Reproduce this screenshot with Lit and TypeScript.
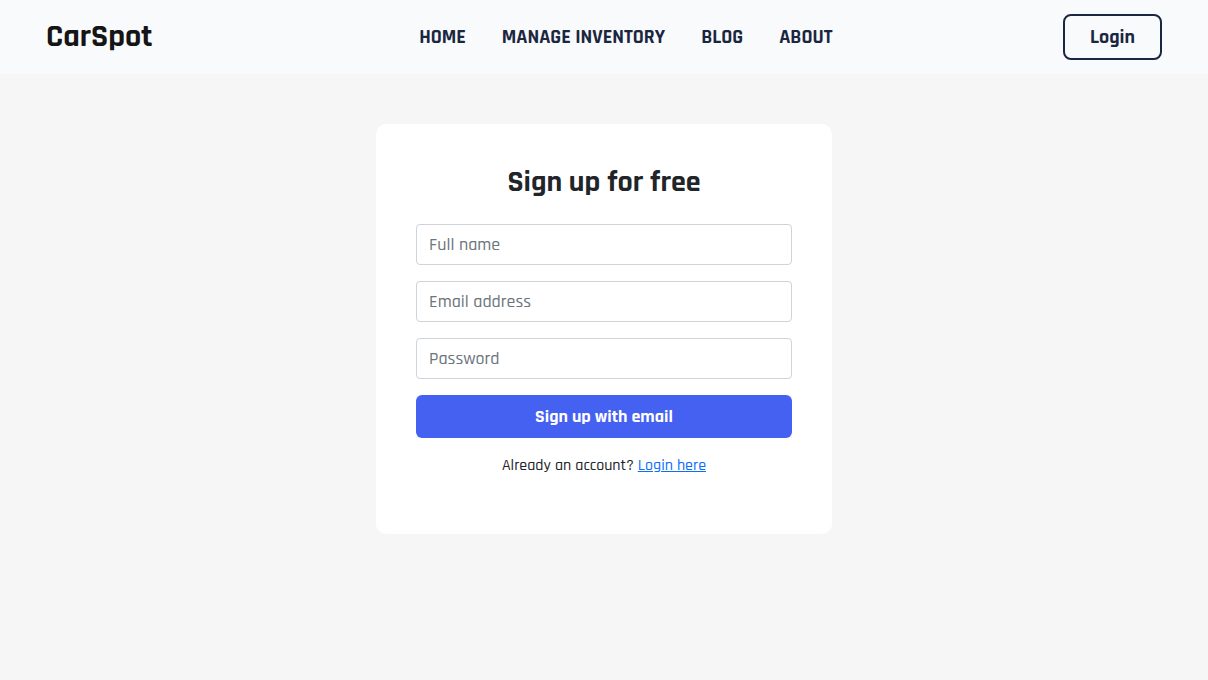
import { LitElement, html, css } from "lit";
import { customElement } from "lit/decorators.js";

const links = ["Home", "Manage Inventory", "Blog", "About"];

const fields = [
  { id: "name", type: "text", label: "Full name" },
  { id: "email", type: "email", label: "Email address" },
  { id: "password", type: "password", label: "Password" },
];

@customElement("site-header")
class SiteHeader extends LitElement {
  static styles = css`
    :host {
      display: block;
      background: #f8fafc;
    }
    .bar {
      display: flex;
      align-items: center;
      justify-content: space-between;
      padding: 14px 46px;
    }
    .brand {
      margin-right: 36px;
      color: #151515;
      font-size: 32px;
      font-weight: 700;
      line-height: 44px;
      text-decoration: none;
    }
    .menu {
      display: flex;
      margin: 0;
      padding: 0;
      list-style: none;
    }
    .link {
      display: block;
      padding: 0 18px;
      color: #1b2640;
      font-size: 20px;
      font-weight: 700;
      line-height: 28px;
      text-decoration: none;
      text-transform: uppercase;
    }
    .login {
      padding: 7px 25px;
      border: 2px solid #1b2640;
      border-radius: 8px;
      background: transparent;
      color: #1b2640;
      font: inherit;
      font-size: 20px;
      font-weight: 700;
      line-height: 28px;
      cursor: pointer;
    }
  `;

  render() {
    return html`
      <header class="bar">
        <a class="brand" href="#">CarSpot</a>
        <nav>
          <ul class="menu">
            ${links.map((l) => html`<li><a class="link" href="#">${l}</a></li>`)}
          </ul>
        </nav>
        <button class="login" type="button">Login</button>
      </header>
    `;
  }
}

@customElement("signup-form")
class SignupForm extends LitElement {
  static styles = css`
    :host {
      display: block;
      width: 100%;
      max-width: 456px;
    }
    .card {
      display: flex;
      flex-direction: column;
      gap: 16px;
      box-sizing: border-box;
      padding: 40px 40px 56px;
      border-radius: 10px;
      background: #fff;
    }
    .title {
      margin: 0 0 8px;
      color: #212529;
      font-size: 30px;
      font-weight: 700;
      line-height: 36px;
      text-align: center;
    }
    .input {
      display: block;
      box-sizing: border-box;
      width: 100%;
      padding: 8px 12px 7px;
      border: 1px solid #ced4da;
      border-radius: 4px;
      background: #fff;
      color: #212529;
      font: inherit;
      font-size: 18px;
      font-weight: 500;
      line-height: 24px;
    }
    .input::placeholder {
      color: #6c757d;
      opacity: 1;
    }
    .submit {
      padding: 10px 12px 9px;
      border: 0;
      border-radius: 6px;
      background: #4461f2;
      color: #fff;
      font: inherit;
      font-size: 18px;
      font-weight: 700;
      line-height: 24px;
      cursor: pointer;
    }
    .note {
      margin: 0;
      color: #212529;
      font-size: 16px;
      font-weight: 500;
      line-height: 24px;
      text-align: center;
    }
    .note a {
      color: #0d6efd;
    }
  `;

  render() {
    return html`
      <form class="card">
        <h1 class="title">Sign up for free</h1>
        ${fields.map(
          (f) => html`
            <input
              class="input"
              id=${f.id}
              type=${f.type}
              placeholder=${f.label}
              aria-label=${f.label}
            />
          `
        )}
        <button class="submit" type="submit">Sign up with email</button>
        <p class="note">Already an account? <a href="#">Login here</a></p>
      </form>
    `;
  }
}

@customElement("app-root")
class AppRoot extends LitElement {
  static styles = css`
    :host {
      display: block;
      min-height: 100vh;
      background: #f6f6f6;
      font-family: Rajdhani, Roboto, "Liberation Sans", sans-serif;
    }
    .content {
      display: flex;
      justify-content: center;
      padding: 50px 16px;
    }
  `;

  render() {
    return html`
      <site-header></site-header>
      <main class="content">
        <signup-form></signup-form>
      </main>
    `;
  }
}
